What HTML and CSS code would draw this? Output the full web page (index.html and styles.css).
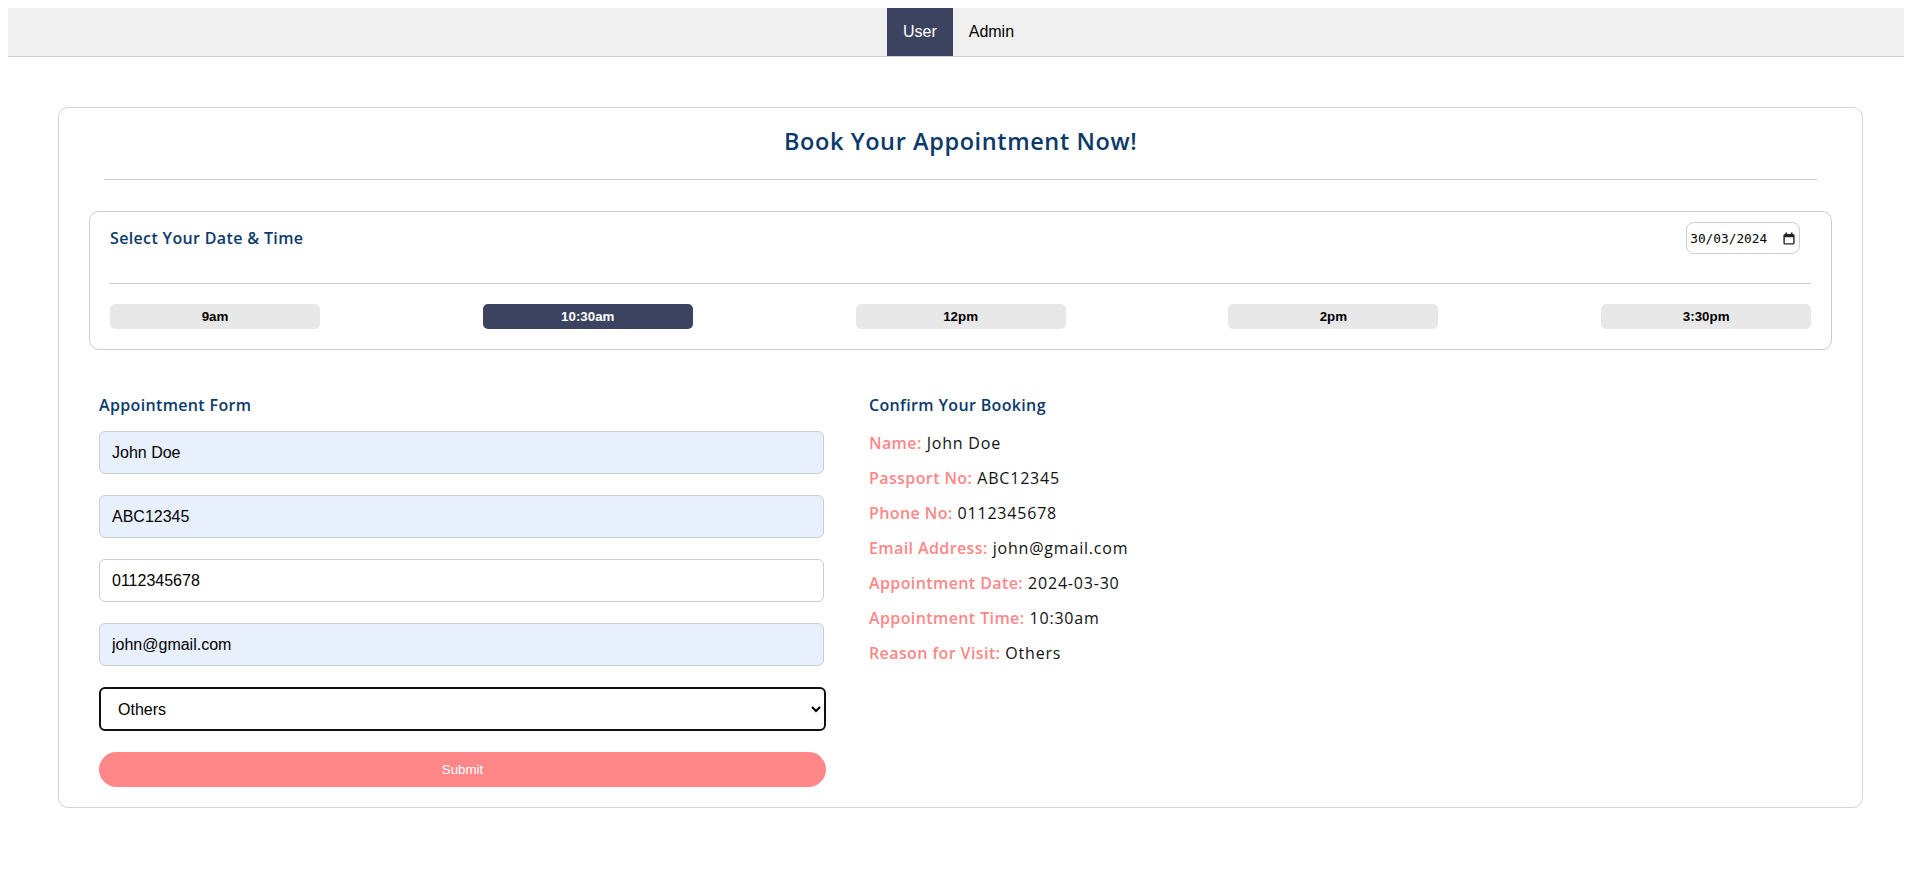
FILE: index.html
```html
<!DOCTYPE html>
<html lang="en">
<head>
<meta charset="utf-8">
<title>Book Your Appointment</title>
<link rel="stylesheet" href="styles.css">
</head>
<body>
<nav class="topnav">
  <a class="tab tab-active" href="#">User</a>
  <a class="tab" href="#">Admin</a>
</nav>

<main class="card">
  <h1 class="title">Book Your Appointment Now!</h1>
  <div class="rule"></div>

  <section class="slot-box">
    <div class="slot-head">
      <h2 class="heading">Select Your Date &amp; Time</h2>
      <div class="date-field">
        <span class="date-text">30/03/2024</span>
        <svg class="cal-icon" width="12" height="13" viewBox="0 0 12 13" aria-hidden="true">
          <rect x="2.5" y="0.5" width="1.6" height="2.5" fill="#222"/>
          <rect x="7.9" y="0.5" width="1.6" height="2.5" fill="#222"/>
          <rect x="1.1" y="2.6" width="9.8" height="9.3" rx="1" fill="none" stroke="#222" stroke-width="1.4"/>
          <rect x="1.1" y="2.6" width="9.8" height="2.6" fill="#222"/>
        </svg>
      </div>
    </div>
    <div class="slot-rule"></div>
    <div class="slots">
      <button class="slot" type="button">9am</button>
      <button class="slot slot-active" type="button">10:30am</button>
      <button class="slot" type="button">12pm</button>
      <button class="slot" type="button">2pm</button>
      <button class="slot" type="button">3:30pm</button>
    </div>
  </section>

  <div class="booking">
    <form class="appt-form">
      <h2 class="heading form-heading">Appointment Form</h2>
      <input class="field field-filled" type="text" value="John Doe">
      <input class="field field-filled" type="text" value="ABC12345">
      <input class="field" type="text" value="0112345678">
      <input class="field field-filled" type="text" value="john@gmail.com">
      <select class="reason">
        <option>Others</option>
      </select>
      <button class="submit" type="button">Submit</button>
    </form>

    <div class="confirm">
      <h2 class="heading form-heading">Confirm Your Booking</h2>
      <p class="detail"><span class="lbl">Name:</span> John Doe</p>
      <p class="detail"><span class="lbl">Passport No:</span> ABC12345</p>
      <p class="detail"><span class="lbl">Phone No:</span> 0112345678</p>
      <p class="detail"><span class="lbl">Email Address:</span> john@gmail.com</p>
      <p class="detail"><span class="lbl">Appointment Date:</span> 2024-03-30</p>
      <p class="detail"><span class="lbl">Appointment Time:</span> 10:30am</p>
      <p class="detail"><span class="lbl">Reason for Visit:</span> Others</p>
    </div>
  </div>
</main>
</body>
</html>
```

FILE: styles.css
```css
body {
  margin: 8px;
  font-family: "Open Sans", Arial, sans-serif;
  color: #111;
  background: #fff;
}

.topnav {
  display: flex;
  justify-content: center;
  padding-left: 5px;
  height: 48px;
  background: #f0f0f0;
  border-bottom: 1px solid #cccccc;
}

.tab {
  display: block;
  padding: 0 16px;
  line-height: 48px;
  font-family: "Liberation Sans", Arial, sans-serif;
  font-size: 16px;
  color: #000;
  text-decoration: none;
}

.tab-active {
  background: #3c4361;
  color: #fff;
}

.card {
  box-sizing: border-box;
  width: calc(95% + 4px);
  margin: 50px 0 0 50px;
  padding: 0 30px 20px;
  border: 1px solid #d4d4d4;
  border-radius: 10px;
}

.title {
  margin: 16px 0 0;
  line-height: 34px;
  font-size: 23.5px;
  font-weight: 600;
  letter-spacing: 0.6px;
  text-align: center;
  color: #0b3a6a;
}

.rule {
  height: 1px;
  margin: 21px 15px 31px;
  background: #cccccc;
}

.slot-box {
  padding: 10px 20px 20px;
  border: 1px solid #cccccc;
  border-radius: 10px;
}

.slot-head {
  display: flex;
  align-items: center;
  justify-content: space-between;
  height: 32px;
  padding-right: 11px;
}

.heading {
  margin: 0;
  font-size: 16px;
  font-weight: 600;
  line-height: 24px;
  letter-spacing: 0.35px;
  color: #0b3a6a;
}

.date-field {
  box-sizing: border-box;
  display: flex;
  align-items: center;
  justify-content: space-between;
  width: 114px;
  height: 32px;
  padding: 0 4px 0 3px;
  border: 1px solid #cccccc;
  border-radius: 8px;
  font-family: "DejaVu Sans Mono", monospace;
  font-size: 12.8px;
  color: #000;
}

.slot-rule {
  height: 1px;
  margin: 29px 0 20px;
  background: #cccccc;
}

.slots {
  display: flex;
  justify-content: space-between;
}

.slot {
  width: 210px;
  height: 25px;
  padding: 0;
  border: none;
  border-radius: 5px;
  background: #e8e8e8;
  font-family: "Liberation Sans", Arial, sans-serif;
  font-size: 13.333px;
  font-weight: 700;
  color: #000;
}

.slot-active {
  background: #3c4361;
  color: #fff;
}

.booking {
  display: grid;
  grid-template-columns: 727px 1fr;
  column-gap: 43px;
  margin-top: 43px;
  padding: 0 10px;
}

.appt-form {
  display: flex;
  flex-direction: column;
  gap: 21px;
  margin: 0;
}

.form-heading {
  margin-bottom: -7px;
}

.field {
  box-sizing: border-box;
  width: calc(100% - 2px);
  height: 43px;
  padding: 0 12px;
  border: 1px solid #cccccc;
  border-radius: 6px;
  background: #fff;
  font-family: "Liberation Sans", Arial, sans-serif;
  font-size: 16px;
  color: #000;
}

.field-filled {
  background: #e8f0fe;
}

.reason {
  box-sizing: border-box;
  width: 100%;
  height: 44px;
  padding: 0 10px 0 13px;
  border: 2px solid #111;
  border-radius: 6px;
  background: #fff;
  font-family: "Liberation Sans", Arial, sans-serif;
  font-size: 16px;
  color: #000;
}

.submit {
  height: 35px;
  border: none;
  border-radius: 18px;
  background: #ff8787;
  font-family: "Liberation Sans", Arial, sans-serif;
  font-size: 13.333px;
  color: #fff;
}

.confirm {
  display: flex;
  flex-direction: column;
  gap: 11px;
}

.confirm .form-heading {
  margin-bottom: 3px;
}

.detail {
  margin: 0;
  font-size: 16px;
  line-height: 24px;
  letter-spacing: 0.8px;
  color: #111;
}

.lbl {
  font-weight: 600;
  letter-spacing: 0.4px;
  color: #ff8787;
}
```
